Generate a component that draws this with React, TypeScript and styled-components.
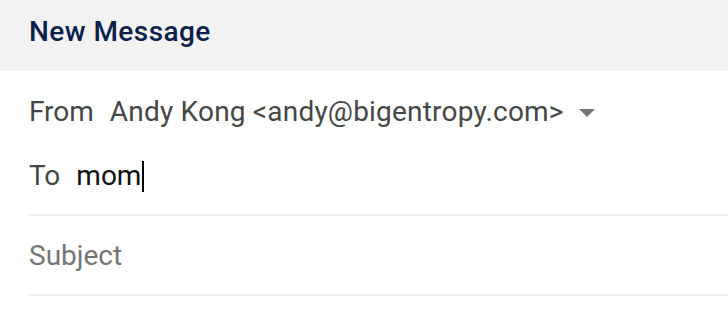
import React from "react";
import styled, { createGlobalStyle } from "styled-components";

const Global = createGlobalStyle`
  html, body { margin: 0; padding: 0; background: #ffffff; }
  body { width: 728px; overflow: hidden; font-family: Roboto, "Noto Sans", Arial, sans-serif; }
`;

const Compose = styled.div`
  width: 728px;
  display: flex;
  flex-direction: column;
`;

const Header = styled.div`
  height: 71px;
  box-sizing: border-box;
  background: #f2f2f2;
  padding: 16px 0 0 29px;
`;

const Title = styled.h1`
  margin: 0;
  font-size: 28px;
  line-height: 32px;
  font-weight: 500;
  color: #0b1f4a;
  letter-spacing: 0.45px;
`;

const Fields = styled.div`
  padding-left: 28px;
  display: flex;
  flex-direction: column;
`;

const Row = styled.div<{ $top: number; $bottom: number; $divider?: boolean }>`
  display: flex;
  align-items: center;
  gap: 16px;
  padding-top: ${(p) => p.$top}px;
  padding-bottom: ${(p) => p.$bottom}px;
  border-bottom: ${(p) => (p.$divider ? "2px solid #efefef" : "none")};
  font-size: 28px;
  line-height: 32px;
`;

const Label = styled.span`
  color: #444746;
  padding-left: 1px;
`;

const Sender = styled.span`
  color: #444746;
  display: flex;
  align-items: center;
  gap: 15px;
  letter-spacing: 0.2px;
`;

const Arrow = styled.span`
  width: 0;
  height: 0;
  border-left: 8px solid transparent;
  border-right: 8px solid transparent;
  border-top: 8px solid #757575;
  margin-top: 2px;
`;

const Recipient = styled.span`
  color: #111111;
  display: flex;
  align-items: center;
`;

const Caret = styled.span`
  display: inline-block;
  width: 0;
  height: 31px;
  border-left: 2px solid #000;
  margin-left: 1px;
`;

const Placeholder = styled.span`
  color: #757575;
  padding-left: 1px;
`;

export default function App() {
  return (
    <Compose>
      <Global />
      <Header>
        <Title>New Message</Title>
      </Header>
      <Fields>
        <Row $top={25} $bottom={0}>
          <Label>From</Label>
          <Sender>
            Andy Kong &lt;andy@bigentropy.com&gt;
            <Arrow />
          </Sender>
        </Row>
        <Row $top={32} $bottom={22} $divider>
          <Label>To</Label>
          <Recipient>
            mom
            <Caret />
          </Recipient>
        </Row>
        <Row $top={24} $bottom={22} $divider>
          <Placeholder>Subject</Placeholder>
        </Row>
      </Fields>
    </Compose>
  );
}
